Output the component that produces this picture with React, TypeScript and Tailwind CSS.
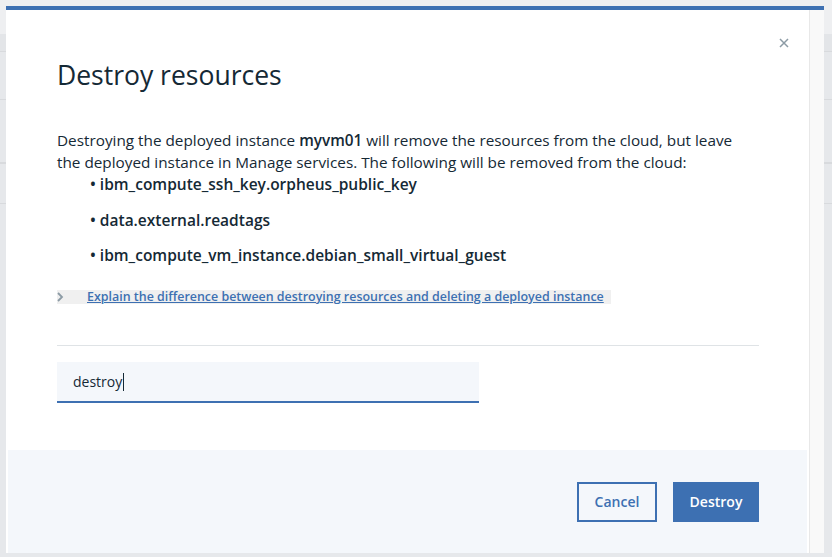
import React from "react";

const items = [
  "ibm_compute_ssh_key.orpheus_public_key",
  "data.external.readtags",
  "ibm_compute_vm_instance.debian_small_virtual_guest",
];

export default function App() {
  return (
    <div
      className="relative w-[832px] h-[557px] overflow-hidden bg-[#e6e8eb]"
      style={{ fontFamily: "'Open Sans', 'Liberation Sans', sans-serif" }}
    >
      {/* page behind the modal */}
      <div className="absolute inset-0 flex flex-col">
        <div className="h-[34px] bg-[#eeeff1]" />
        <div className="h-[18px] bg-[#e3e5e8] border-b border-[#d8dadd]" />
        <div className="h-[48px] border-b border-[#d8dadd]" />
        <div className="h-[64px] border-b-2 border-[#d8dadd]" />
        <div className="h-[40px] border-b border-[#d8dadd]" />
      </div>

      {/* modal */}
      <div className="absolute left-[6px] top-[6px] w-[818px] h-[547px] flex flex-col border-t-4 border-[#3d70b2] bg-white">
        <div className="flex flex-1">
          <div className="relative flex w-[803px] flex-col">
            <button className="absolute right-[20px] top-[28px] text-[#8c9ba5]">
              <svg width="10" height="10" viewBox="0 0 10 10">
                <path d="M1 1L9 9M9 1L1 9" stroke="currentColor" strokeWidth="1.5" />
              </svg>
            </button>

            <div className="flex-1 pl-[51px] pr-[50px]">
              <h1 className="mt-[49px] text-[26.5px] leading-[32px] text-[#152935]">
                Destroy resources
              </h1>

              <p className="mt-[38px] text-[15.3px] leading-[22px] text-[#152935]">
                Destroying the deployed instance <b className="font-semibold">myvm01</b> will
                remove the resources from the cloud, but leave the deployed instance in Manage
                services. The following will be removed from the cloud:
              </p>
              <ul className="flex flex-col gap-[13.5px] pl-[33px] text-[15.5px] leading-[22px] font-semibold text-[#152935]">
                {items.map((it) => (
                  <li key={it}>• {it}</li>
                ))}
              </ul>

              <div className="mt-[24px] flex items-center">
                <div className="flex h-[14px] items-center bg-[#f0f0f0] pr-[7px]">
                  <svg width="30" height="14" viewBox="0 0 30 14" className="text-[#8c9ba5]">
                    <path d="M1 3L5 7L1 11" fill="none" stroke="currentColor" strokeWidth="1.8" />
                  </svg>
                  <a className="text-[12.45px] leading-[14px] font-semibold text-[#3d70b2] underline">
                    Explain the difference between destroying resources and deleting a deployed instance
                  </a>
                </div>
              </div>

              <div className="mt-[41px] h-px bg-[#dfe3e6]" />

              <div className="mt-[16px] flex h-[41px] w-[422px] items-center border-b-2 border-[#3d70b2] bg-[#f4f7fb] pl-[16px] text-[14px] text-[#152935]">
                destroy<span className="ml-px inline-block h-[18px] w-px bg-[#152935]" />
              </div>
            </div>

            <div className="mx-[2px] flex h-[103px] items-center justify-end gap-[16px] bg-[#f4f7fb] pr-[48px]">
              <button className="h-[40px] w-[80px] border-2 border-[#3d70b2] text-[14px] font-semibold text-[#3d70b2]">
                Cancel
              </button>
              <button className="h-[40px] w-[86px] bg-[#3d70b2] text-[14px] font-semibold text-white">
                Destroy
              </button>
            </div>
          </div>
          <div className="w-[15px] border-l border-[#e8e8e8] bg-[#f9f9f9]" />
        </div>
      </div>
    </div>
  );
}
